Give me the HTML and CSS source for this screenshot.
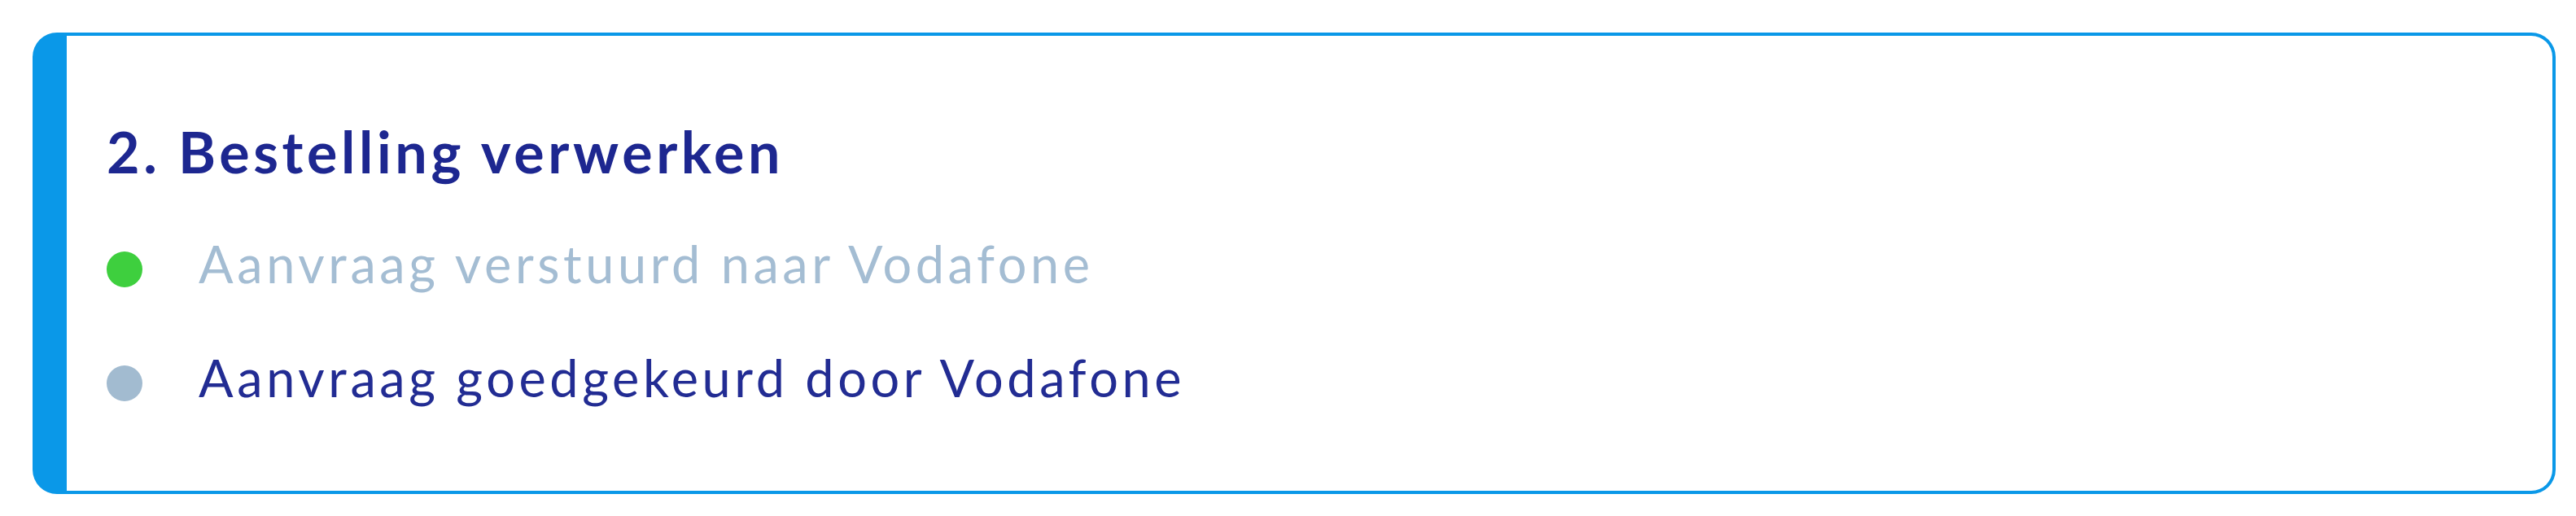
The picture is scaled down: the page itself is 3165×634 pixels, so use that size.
FILE: index.html
```html
<!DOCTYPE html>
<html lang="nl">
<head>
<meta charset="utf-8">
<title>Bestelling verwerken</title>
<link rel="stylesheet" href="styles.css">
</head>
<body>
<section class="card">
  <h2 class="card-title">2. Bestelling verwerken</h2>
  <ul class="steps">
    <li class="step step-done"><span class="dot"></span><span class="label">Aanvraag verstuurd naar Vodafone</span></li>
    <li class="step step-active"><span class="dot"></span><span class="label">Aanvraag goedgekeurd door Vodafone</span></li>
  </ul>
</section>
</body>
</html>
```

FILE: styles.css
```css
html, body {
  margin: 0;
  padding: 0;
  background: #ffffff;
}

body {
  padding: 40px 0 0 40px;
  font-family: Lato, "Open Sans", "Liberation Sans", sans-serif;
}

.card {
  box-sizing: border-box;
  width: 3100px;
  height: 567px;
  border: 4px solid #0a98e8;
  border-left-width: 42px;
  border-radius: 30px;
  padding: 100px 0 0 49px;
  background: #ffffff;
}

.card-title {
  margin: 0;
  font-size: 70px;
  line-height: 84px;
  font-weight: 700;
  letter-spacing: 4.6px;
  color: #1d2790;
}

.steps {
  list-style: none;
  margin: 58px 0 0 0;
  padding: 0;
  display: flex;
  flex-direction: column;
  gap: 64px;
}

.step {
  display: flex;
  align-items: flex-start;
  gap: 69px;
  font-size: 63px;
  line-height: 76px;
  letter-spacing: 4.6px;
}

.dot {
  flex: none;
  width: 44px;
  height: 44px;
  border-radius: 50%;
  margin-top: 23px;
}

.step-done .dot {
  background: #3ecf3e;
}

.step-done .label {
  color: #a4bdd3;
}

.step-active .dot {
  background: #a2bbd0;
}

.step-active .label {
  color: #222c93;
}
```
